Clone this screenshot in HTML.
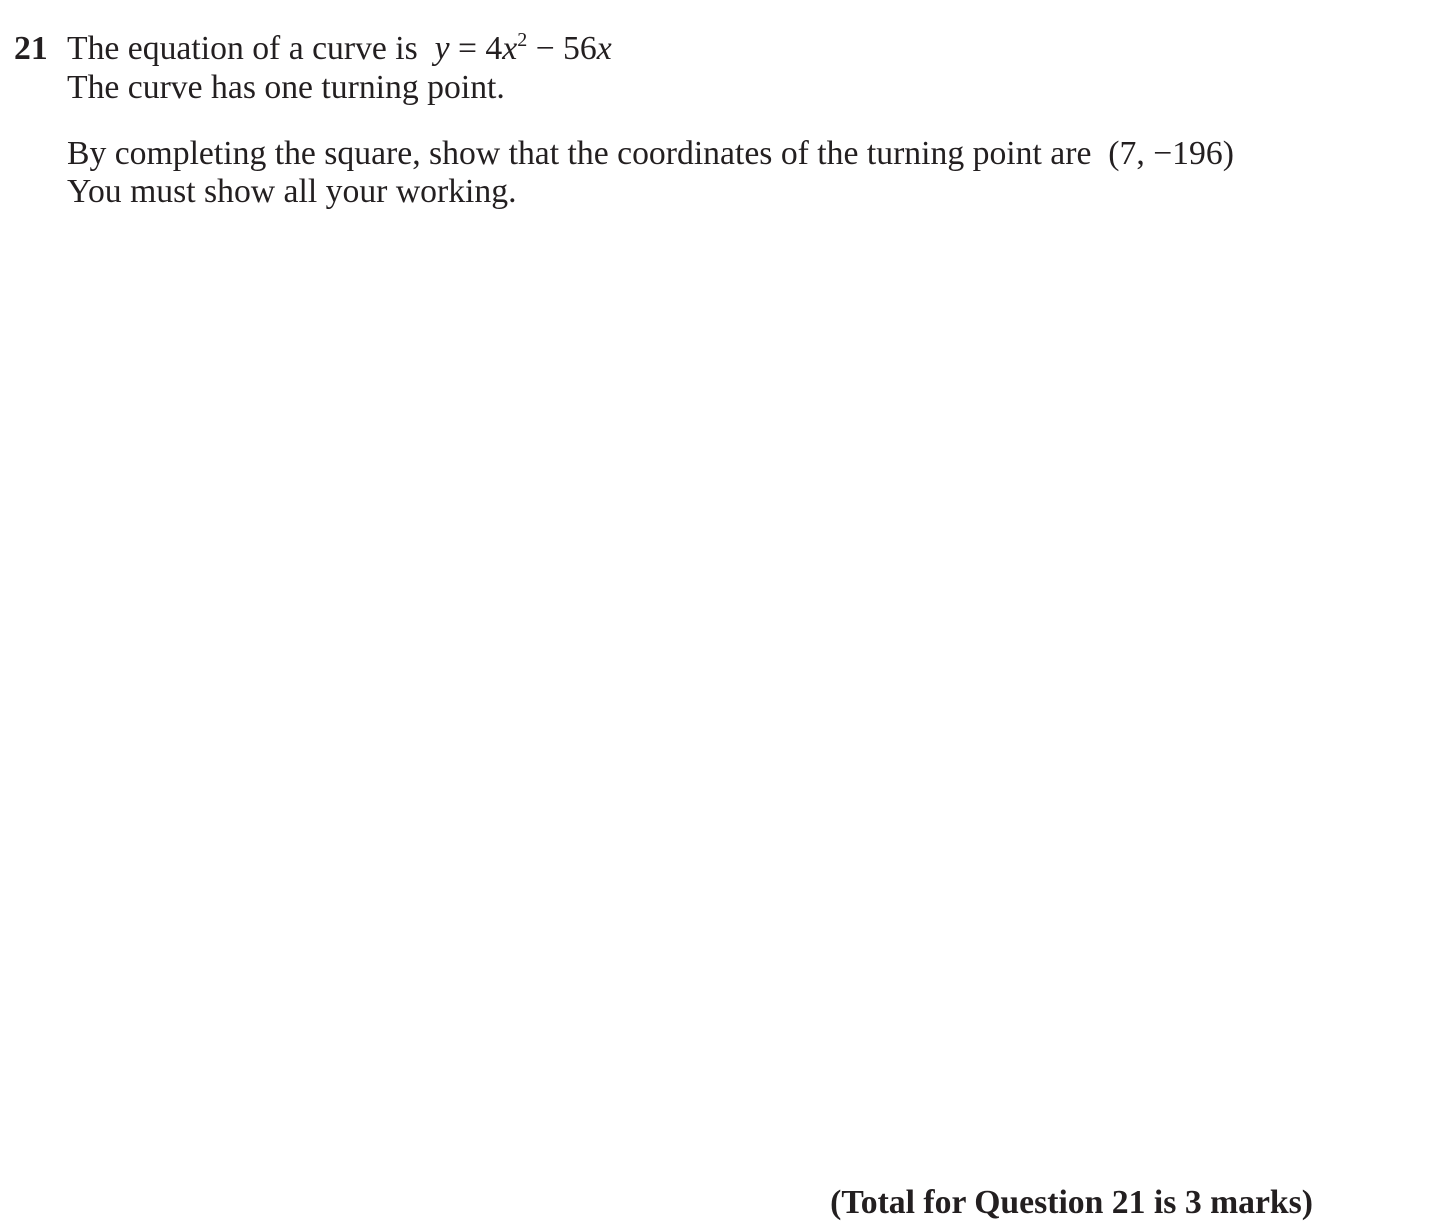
<!DOCTYPE html>
<html><head><meta charset="utf-8"><style>
html,body{margin:0;padding:0;background:#fff;}
body{width:1446px;height:1220px;position:relative;overflow:hidden;font-family:"Liberation Serif",serif;font-size:33.7px;color:#231f20;}
.l{position:absolute;white-space:nowrap;line-height:32px;}
i{font-style:italic;}
sup{font-size:20px;vertical-align:0;position:relative;top:-13px;}
</style></head><body>
<div class="l" style="left:14px;top:33px;font-weight:bold;">21</div>
<div class="l" style="left:67px;top:33px;">The equation of a curve is &nbsp;<i>y</i> = 4<i>x</i><sup>2</sup> − 56<i>x</i></div>
<div class="l" style="left:67px;top:72px;">The curve has one turning point.</div>
<div class="l" style="left:67px;top:138px;">By completing the square, show that the coordinates of the turning point are &nbsp;(7, −196)</div>
<div class="l" style="left:67px;top:176px;">You must show all your working.</div>
<div class="l" style="right:133px;top:1187px;font-weight:bold;">(Total for Question 21 is 3 marks)</div>
</body></html>
